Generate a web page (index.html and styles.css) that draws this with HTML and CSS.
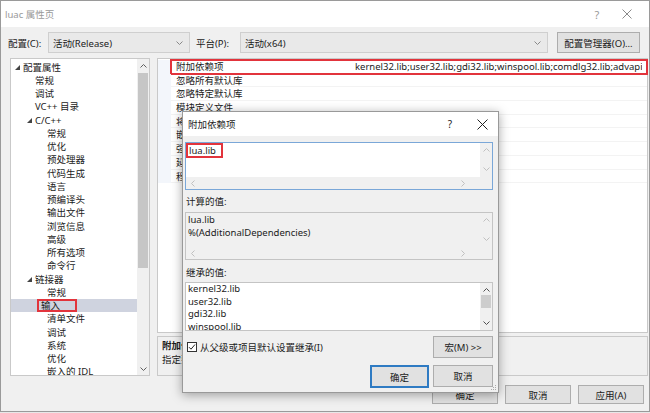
FILE: index.html
```html
<!DOCTYPE html>
<html>
<head>
    <meta charset="utf-8">
    <link rel="stylesheet" href="styles.css">
</head>
<body>
    <div class="window">
        <div class="titlebar">
            <span class="title">luac 属性页</span>
            <span class="caption-btn help">?</span>
            <span class="caption-btn close">
                <svg width="10" height="10" viewBox="0 0 10 10"><path d="M0.5 0.5L9.5 9.5M9.5 0.5L0.5 9.5" stroke="#8a8a8a" stroke-width="1"/></svg>
            </span>
        </div>

        <div class="toolbar">
            <label class="tb-label">配置(C):</label>
            <div class="combo combo-config">
                <span>活动(Release)</span>
                <svg class="chev" width="7" height="4" viewBox="0 0 7 4"><path d="M0.5 0.5L3.5 3.5L6.5 0.5" fill="none" stroke="#888" stroke-width="1"/></svg>
            </div>
            <label class="tb-label tb-label2">平台(P):</label>
            <div class="combo combo-platform">
                <span>活动(x64)</span>
                <svg class="chev" width="7" height="4" viewBox="0 0 7 4"><path d="M0.5 0.5L3.5 3.5L6.5 0.5" fill="none" stroke="#888" stroke-width="1"/></svg>
            </div>
            <button class="btn btn-manager">配置管理器(O)...</button>
        </div>

        <div class="main">
            <div class="tree">
                <ul class="tree-list">
                    <li class="lv0"><span class="twisty"><svg width="5" height="5" viewBox="0 0 5 5"><path d="M5 0L5 5L0 5Z" fill="#444"/></svg></span>配置属性</li>
                    <li class="lv1"><span class="twisty"></span>常规</li>
                    <li class="lv1"><span class="twisty"></span>调试</li>
                    <li class="lv1"><span class="twisty"></span>VC++ 目录</li>
                    <li class="lv1"><span class="twisty"><svg width="5" height="5" viewBox="0 0 5 5"><path d="M5 0L5 5L0 5Z" fill="#444"/></svg></span>C/C++</li>
                    <li class="lv2"><span class="twisty"></span>常规</li>
                    <li class="lv2"><span class="twisty"></span>优化</li>
                    <li class="lv2"><span class="twisty"></span>预处理器</li>
                    <li class="lv2"><span class="twisty"></span>代码生成</li>
                    <li class="lv2"><span class="twisty"></span>语言</li>
                    <li class="lv2"><span class="twisty"></span>预编译头</li>
                    <li class="lv2"><span class="twisty"></span>输出文件</li>
                    <li class="lv2"><span class="twisty"></span>浏览信息</li>
                    <li class="lv2"><span class="twisty"></span>高级</li>
                    <li class="lv2"><span class="twisty"></span>所有选项</li>
                    <li class="lv2"><span class="twisty"></span>命令行</li>
                    <li class="lv1"><span class="twisty"><svg width="5" height="5" viewBox="0 0 5 5"><path d="M5 0L5 5L0 5Z" fill="#444"/></svg></span>链接器</li>
                    <li class="lv2"><span class="twisty"></span>常规</li>
                    <li class="lv2 selected"><span class="twisty"></span><span class="mark-box">输入</span></li>
                    <li class="lv2"><span class="twisty"></span>清单文件</li>
                    <li class="lv2"><span class="twisty"></span>调试</li>
                    <li class="lv2"><span class="twisty"></span>系统</li>
                    <li class="lv2"><span class="twisty"></span>优化</li>
                    <li class="lv2"><span class="twisty"></span>嵌入的 IDL</li>
                </ul>
                <div class="vscroll">
                    <span class="arrow"><svg width="7" height="4" viewBox="0 0 7 4"><path d="M0.5 3.5L3.5 0.5L6.5 3.5" fill="none" stroke="#606060" stroke-width="1"/></svg></span>
                    <div class="track"><div class="thumb"></div></div>
                    <span class="arrow"><svg width="7" height="4" viewBox="0 0 7 4"><path d="M0.5 0.5L3.5 3.5L6.5 0.5" fill="none" stroke="#606060" stroke-width="1"/></svg></span>
                </div>
            </div>

            <div class="right">
                <div class="grid">
                    <div class="prop-row marked">
                        <div class="gutter"></div>
                        <div class="cells">
                            <div class="prop-name">附加依赖项</div>
                            <div class="prop-value">kernel32.lib;user32.lib;gdi32.lib;winspool.lib;comdlg32.lib;advapi32.lib;shell32.lib;ole32.lib;oleaut32.lib;uuid.lib;odbc32.lib;odbccp32.lib;%(AdditionalDependencies)</div>
                        </div>
                    </div>
                    <div class="prop-row"><div class="gutter"></div><div class="cells"><div class="prop-name">忽略所有默认库</div><div class="prop-value"></div></div></div>
                    <div class="prop-row"><div class="gutter"></div><div class="cells"><div class="prop-name">忽略特定默认库</div><div class="prop-value"></div></div></div>
                    <div class="prop-row"><div class="gutter"></div><div class="cells"><div class="prop-name">模块定义文件</div><div class="prop-value"></div></div></div>
                    <div class="prop-row"><div class="gutter"></div><div class="cells"><div class="prop-name">将模块添加到程序集</div><div class="prop-value"></div></div></div>
                    <div class="prop-row"><div class="gutter"></div><div class="cells"><div class="prop-name">嵌入托管资源文件</div><div class="prop-value"></div></div></div>
                    <div class="prop-row"><div class="gutter"></div><div class="cells"><div class="prop-name">强制符号引用</div><div class="prop-value"></div></div></div>
                    <div class="prop-row"><div class="gutter"></div><div class="cells"><div class="prop-name">延迟加载的 DLL</div><div class="prop-value"></div></div></div>
                    <div class="prop-row"><div class="gutter"></div><div class="cells"><div class="prop-name">程序集链接资源</div><div class="prop-value"></div></div></div>
                </div>
                <div class="desc">
                    <div class="desc-title">附加依赖项</div>
                    <div>指定要添加到链接命令行的附加项。[例如 kernel32.lib]</div>
                </div>
            </div>
        </div>

        <div class="footer">
            <button class="btn btn-footer">确定</button>
            <button class="btn btn-footer">取消</button>
            <button class="btn btn-footer">应用(A)</button>
        </div>

        <!-- 附加依赖项 dialog, floating over the property page -->
        <div class="dialog">
            <div class="dlg-titlebar">
                <span class="title">附加依赖项</span>
                <span class="caption-btn dlg-help">?</span>
                <span class="caption-btn dlg-close">
                    <svg width="11" height="11" viewBox="0 0 11 11"><path d="M0.5 0.5L10.5 10.5M10.5 0.5L0.5 10.5" stroke="#222" stroke-width="1"/></svg>
                </span>
            </div>
            <div class="dlg-body">
                <div class="edit-box focused">
                    <div class="edit-text"><span class="mark-lua">lua.lib</span></div>
                    <div class="sb-v disabled">
                        <svg width="7" height="4" viewBox="0 0 7 4"><path d="M0.5 3.5L3.5 0.5L6.5 3.5" fill="none" stroke="#c0c0c0" stroke-width="1"/></svg>
                        <svg width="7" height="4" viewBox="0 0 7 4"><path d="M0.5 0.5L3.5 3.5L6.5 0.5" fill="none" stroke="#c0c0c0" stroke-width="1"/></svg>
                    </div>
                    <div class="sb-h disabled">
                        <svg width="4" height="7" viewBox="0 0 4 7"><path d="M3.5 0.5L0.5 3.5L3.5 6.5" fill="none" stroke="#c0c0c0" stroke-width="1"/></svg>
                        <svg width="4" height="7" viewBox="0 0 4 7"><path d="M0.5 0.5L3.5 3.5L0.5 6.5" fill="none" stroke="#c0c0c0" stroke-width="1"/></svg>
                    </div>
                    <div class="sb-corner"></div>
                </div>

                <div class="dlg-label">计算的值:</div>
                <div class="edit-box readonly">
                    <div class="edit-text lines-computed">
                        <div>lua.lib</div>
                        <div>%(AdditionalDependencies)</div>
                    </div>
                    <div class="sb-v disabled">
                        <svg width="7" height="4" viewBox="0 0 7 4"><path d="M0.5 3.5L3.5 0.5L6.5 3.5" fill="none" stroke="#c0c0c0" stroke-width="1"/></svg>
                        <svg width="7" height="4" viewBox="0 0 7 4"><path d="M0.5 0.5L3.5 3.5L6.5 0.5" fill="none" stroke="#c0c0c0" stroke-width="1"/></svg>
                    </div>
                    <div class="sb-h disabled">
                        <svg width="4" height="7" viewBox="0 0 4 7"><path d="M3.5 0.5L0.5 3.5L3.5 6.5" fill="none" stroke="#c0c0c0" stroke-width="1"/></svg>
                        <svg width="4" height="7" viewBox="0 0 4 7"><path d="M0.5 0.5L3.5 3.5L0.5 6.5" fill="none" stroke="#c0c0c0" stroke-width="1"/></svg>
                    </div>
                    <div class="sb-corner"></div>
                </div>

                <div class="dlg-label label-inherit">继承的值:</div>
                <div class="edit-box list-box">
                    <div class="edit-text lines-inherited">
                        <div>kernel32.lib</div>
                        <div>user32.lib</div>
                        <div>gdi32.lib</div>
                        <div>winspool.lib</div>
                        <div>comdlg32.lib</div>
                    </div>
                    <div class="sb-v active">
                        <svg width="7" height="4" viewBox="0 0 7 4"><path d="M0.5 3.5L3.5 0.5L6.5 3.5" fill="none" stroke="#505050" stroke-width="1"/></svg>
                        <div class="sb-thumb-area"><div class="sb-thumb"></div></div>
                        <svg width="7" height="4" viewBox="0 0 7 4"><path d="M0.5 0.5L3.5 3.5L6.5 0.5" fill="none" stroke="#505050" stroke-width="1"/></svg>
                    </div>
                </div>

                <div class="check-row">
                    <label class="check">
                        <span class="check-box">
                            <svg width="8" height="8" viewBox="0 0 8 8"><path d="M1 4.2L3 6.2L7 1.5" fill="none" stroke="#222" stroke-width="1"/></svg>
                        </span>
                        从父级或项目默认设置继承(I)
                    </label>
                    <button class="btn btn-dlg">宏(M) &gt;&gt;</button>
                </div>

                <div class="dlg-buttons">
                    <button class="btn btn-dlg default">确定</button>
                    <button class="btn btn-dlg">取消</button>
                </div>
            </div>
            <svg class="grip" width="8" height="8" viewBox="0 0 8 8">
                <rect x="6" y="2" width="1" height="1" fill="#aaa"/>
                <rect x="4" y="4" width="1" height="1" fill="#aaa"/>
                <rect x="6" y="4" width="1" height="1" fill="#aaa"/>
                <rect x="2" y="6" width="1" height="1" fill="#aaa"/>
                <rect x="4" y="6" width="1" height="1" fill="#aaa"/>
                <rect x="6" y="6" width="1" height="1" fill="#aaa"/>
            </svg>
        </div>
    </div>
</body>
</html>
```

FILE: styles.css
```css
* {
    box-sizing: border-box;
}
body {
    margin: 0;
    width: 650px;
    height: 413px;
    overflow: hidden;
    background-color: #e8e8e8;
    font-family: "Noto Sans", "Noto Sans CJK SC", sans-serif;
    font-size: 9.5px;
    color: #1b1b1b;
}
.window {
    position: relative;
    width: 650px;
    height: 412px;
    background-color: #f0f0f0;
    border: 1px solid #9a9a9a;
}

/* title bar */
.titlebar {
    display: flex;
    align-items: center;
    height: 26px;
    padding: 0 7px 0 4px;
    background-color: #fff;
}
.titlebar .title {
    color: #999;
    font-size: 9.5px;
}
.caption-btn {
    display: flex;
    align-items: center;
    justify-content: center;
    width: 30px;
    color: #999;
    font-size: 11px;
}
.help {
    margin-left: auto;
}

/* config / platform row */
.toolbar {
    display: flex;
    align-items: center;
    height: 31px;
    padding: 0 0 0 7px;
}
.tb-label {
    width: 40px;
}
.tb-label2 {
    width: 44px;
    margin-left: 6px;
}
.combo {
    display: flex;
    align-items: center;
    justify-content: space-between;
    height: 21px;
    padding: 0 6px 0 4px;
    background-color: #e9e9e9;
    border: 1px solid #cfcfcf;
}
.combo-config {
    width: 142px;
}
.combo-platform {
    width: 308px;
}
.btn {
    font-family: inherit;
    font-size: 9.5px;
    color: #1b1b1b;
    background-color: #e1e1e1;
    border: 1px solid #adadad;
    padding: 0;
}
.btn-manager {
    width: 83px;
    height: 21px;
    margin-left: 9px;
}

/* tree + property grid */
.main {
    display: flex;
    gap: 7px;
    height: 318px;
    padding-left: 9px;
}
.tree {
    display: flex;
    width: 140px;
    border: 1px solid #c9c9c9;
    background-color: #fff;
    overflow: hidden;
}
.tree-list {
    flex: 1;
    list-style: none;
    margin: 0;
    padding: 1.5px 0 0 0;
}
.tree-list li {
    display: flex;
    align-items: center;
    height: 13.25px;
    line-height: 13.25px;
    white-space: nowrap;
}
.tree-list .lv0 { padding-left: 1px; }
.tree-list .lv1 { padding-left: 13px; }
.tree-list .lv2 { padding-left: 25px; }
.twisty {
    display: flex;
    align-items: center;
    justify-content: center;
    width: 11px;
    flex-shrink: 0;
}
.tree-list .selected {
    background-color: #cfd3df;
}
.mark-box {
    display: inline-block;
    height: 13px;
    line-height: 9px;
    margin-left: -10px;
    padding: 0 15px 0 2px;
    border: 2px solid #e2343c;
}
.vscroll {
    display: flex;
    flex-direction: column;
    width: 12px;
    background-color: #f0f0f0;
}
.vscroll .arrow {
    display: flex;
    align-items: center;
    justify-content: center;
    height: 13px;
}
.vscroll .track {
    flex: 1;
    padding: 1px 1px;
}
.vscroll .thumb {
    height: 195px;
    background-color: #c6c6c6;
}

.right {
    display: flex;
    flex-direction: column;
    gap: 3px;
    width: 491px;
}
.grid {
    height: 275px;
    padding-top: 1px;
    border: 1px solid #c9c9c9;
    background-color: #fff;
}
.prop-row {
    display: flex;
    height: 13.7px;
}
.gutter {
    width: 13px;
    background-color: #f3f6fb;
}
.cells {
    flex: 1;
    display: flex;
    min-width: 0;
    border-bottom: 1px solid #f3f3f3;
}
.prop-row.marked .cells {
    outline: 2px solid #e2343c;
    outline-offset: -1px;
}
.prop-name {
    width: 183px;
    padding-left: 5px;
    line-height: 13px;
    white-space: nowrap;
}
.prop-value {
    flex: 1;
    margin-right: 5px;
    padding-left: 1px;
    line-height: 13px;
    white-space: nowrap;
    overflow: hidden;
}
.desc {
    height: 40px;
    padding: 2px 4px;
    border: 1px solid #c9c9c9;
    line-height: 14px;
}
.desc-title {
    font-weight: bold;
}

/* bottom buttons */
.footer {
    display: flex;
    justify-content: flex-end;
    gap: 7px;
    padding: 9px 5px 0 0;
}
.btn-footer {
    width: 66px;
    height: 19px;
}

/* dialog */
.dialog {
    position: absolute;
    left: 181px;
    top: 110px;
    width: 317px;
    height: 282px;
    background-color: #f0f0f0;
    border: 1px solid #999;
    box-shadow: 0 2px 10px rgba(0, 0, 0, 0.35);
}
.dlg-titlebar {
    display: flex;
    align-items: center;
    height: 24px;
    padding-left: 5px;
    background-color: #fff;
}
.dlg-help {
    margin-left: auto;
    width: 32px;
    color: #222;
    font-size: 10px;
}
.dlg-close {
    width: 32px;
}
.dlg-body {
    padding: 6px 5px 0 2px;
}
.edit-box {
    display: grid;
    grid-template-columns: 1fr 12px;
    grid-template-rows: 1fr 12px;
    height: 48px;
    border: 1px solid #c4c4c4;
    background-color: #fff;
}
.edit-box.focused {
    border-color: #7aa7d8;
}
.edit-box.readonly {
    background-color: #f0f0f0;
}
.edit-text {
    line-height: 13px;
    white-space: nowrap;
    overflow: hidden;
}
.mark-lua {
    display: inline-block;
    height: 15px;
    line-height: 11px;
    padding: 0 5px 0 1px;
    border: 2px solid #e2343c;
}
.lines-computed {
    padding-left: 2px;
}
.sb-v {
    display: flex;
    flex-direction: column;
    align-items: center;
    justify-content: space-between;
    padding: 5px 0 6px;
    background-color: #f0f0f0;
}
.sb-h {
    display: flex;
    align-items: center;
    justify-content: space-between;
    padding: 0 15px 0 5px;
    background-color: #f0f0f0;
}
.sb-corner {
    background-color: #f0f0f0;
}
.dlg-label {
    height: 22px;
    padding: 5px 0 0 1px;
    line-height: 13px;
}
.label-inherit {
    padding-top: 6px;
}
.list-box {
    grid-template-rows: 1fr;
    height: 49px;
}
.lines-inherited {
    padding: 0 0 0 2px;
    line-height: 12.5px;
}
.sb-v.active {
    padding: 5px 0 5px;
}
.sb-thumb-area {
    flex: 1;
    width: 100%;
    padding: 3px 1px 0;
}
.sb-thumb {
    height: 13px;
    background-color: #cdcdcd;
}
.check-row {
    display: flex;
    align-items: center;
    justify-content: space-between;
    margin-top: 5px;
    height: 22px;
}
.check {
    display: flex;
    align-items: center;
    gap: 3px;
    padding-left: 2px;
}
.check-box {
    display: flex;
    align-items: center;
    justify-content: center;
    width: 10px;
    height: 10px;
    border: 1px solid #333;
    background-color: #fff;
}
.btn-dlg {
    width: 60px;
    height: 22px;
}
.dlg-buttons {
    display: flex;
    justify-content: flex-end;
    gap: 4px;
    margin-top: 7px;
}
.btn-dlg.default {
    width: 59px;
    height: 23px;
    border: 1px solid #2f7bc3;
    box-shadow: inset 0 0 0 1px #2f7bc3;
}
.grip {
    position: absolute;
    right: 1px;
    bottom: 1px;
}
```
